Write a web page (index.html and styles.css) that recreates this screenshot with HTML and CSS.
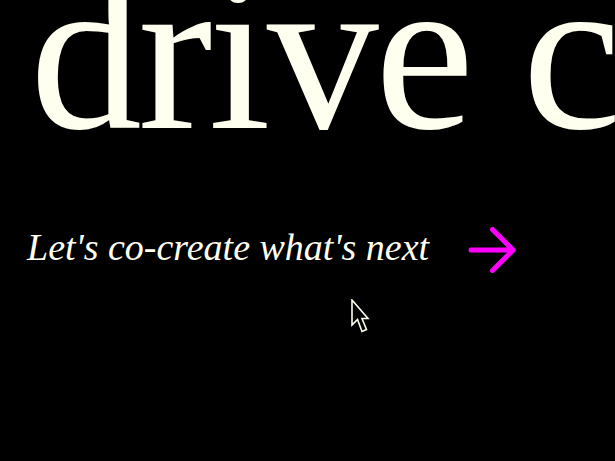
FILE: index.html
```html
<!DOCTYPE html>
<html>
<head>
<meta charset="utf-8">
<link rel="stylesheet" href="styles.css">
</head>
<body>
<main class="hero">
  <h1 class="headline">drive c</h1>
  <a class="cta" href="#">
    <span class="cta-text">Let's co-create what's next</span>
    <svg class="cta-arrow" width="50" height="46" viewBox="0 0 50 46" aria-hidden="true">
      <path d="M3 23 H45 M24.5 2.5 L45 23 L24.5 43.5" fill="none" stroke="#f0f" stroke-width="5" stroke-linecap="round" stroke-linejoin="round"/>
    </svg>
  </a>
</main>
<svg class="cursor" width="22" height="36" viewBox="0 0 22 36" aria-hidden="true">
  <path d="M1 1 L1 26 L6.5 20.5 L11 32.5 L15.5 30.5 L11 19.5 L17 19.5 Z" fill="#000" stroke="#fffff0" stroke-width="1.6" stroke-linejoin="miter"/>
</svg>
</body>
</html>
```
FILE: styles.css
```css
html, body {
  margin: 0;
  padding: 0;
  background: #000;
  width: 615px;
  height: 461px;
  overflow: hidden;
}
.hero {
  padding-left: 30px;
}
.headline {
  margin: -60px 0 0 0;
  font-family: "Liberation Serif", "Times New Roman", serif;
  font-weight: 400;
  font-size: 224px;
  line-height: 1;
  letter-spacing: -4px;
  color: #fffff0;
  white-space: nowrap;
}
.cta {
  display: flex;
  align-items: flex-start;
  gap: 39px;
  margin-top: 63px;
  margin-left: -3px;
  text-decoration: none;
}
.cta-text {
  font-family: "Liberation Serif", "Times New Roman", serif;
  font-style: italic;
  font-size: 38px;
  line-height: 40px;
  color: #fffff0;
  white-space: nowrap;
}
.cta-arrow {
  display: block;
}
.cursor {
  position: absolute;
  left: 351px;
  top: 299px;
}
```
